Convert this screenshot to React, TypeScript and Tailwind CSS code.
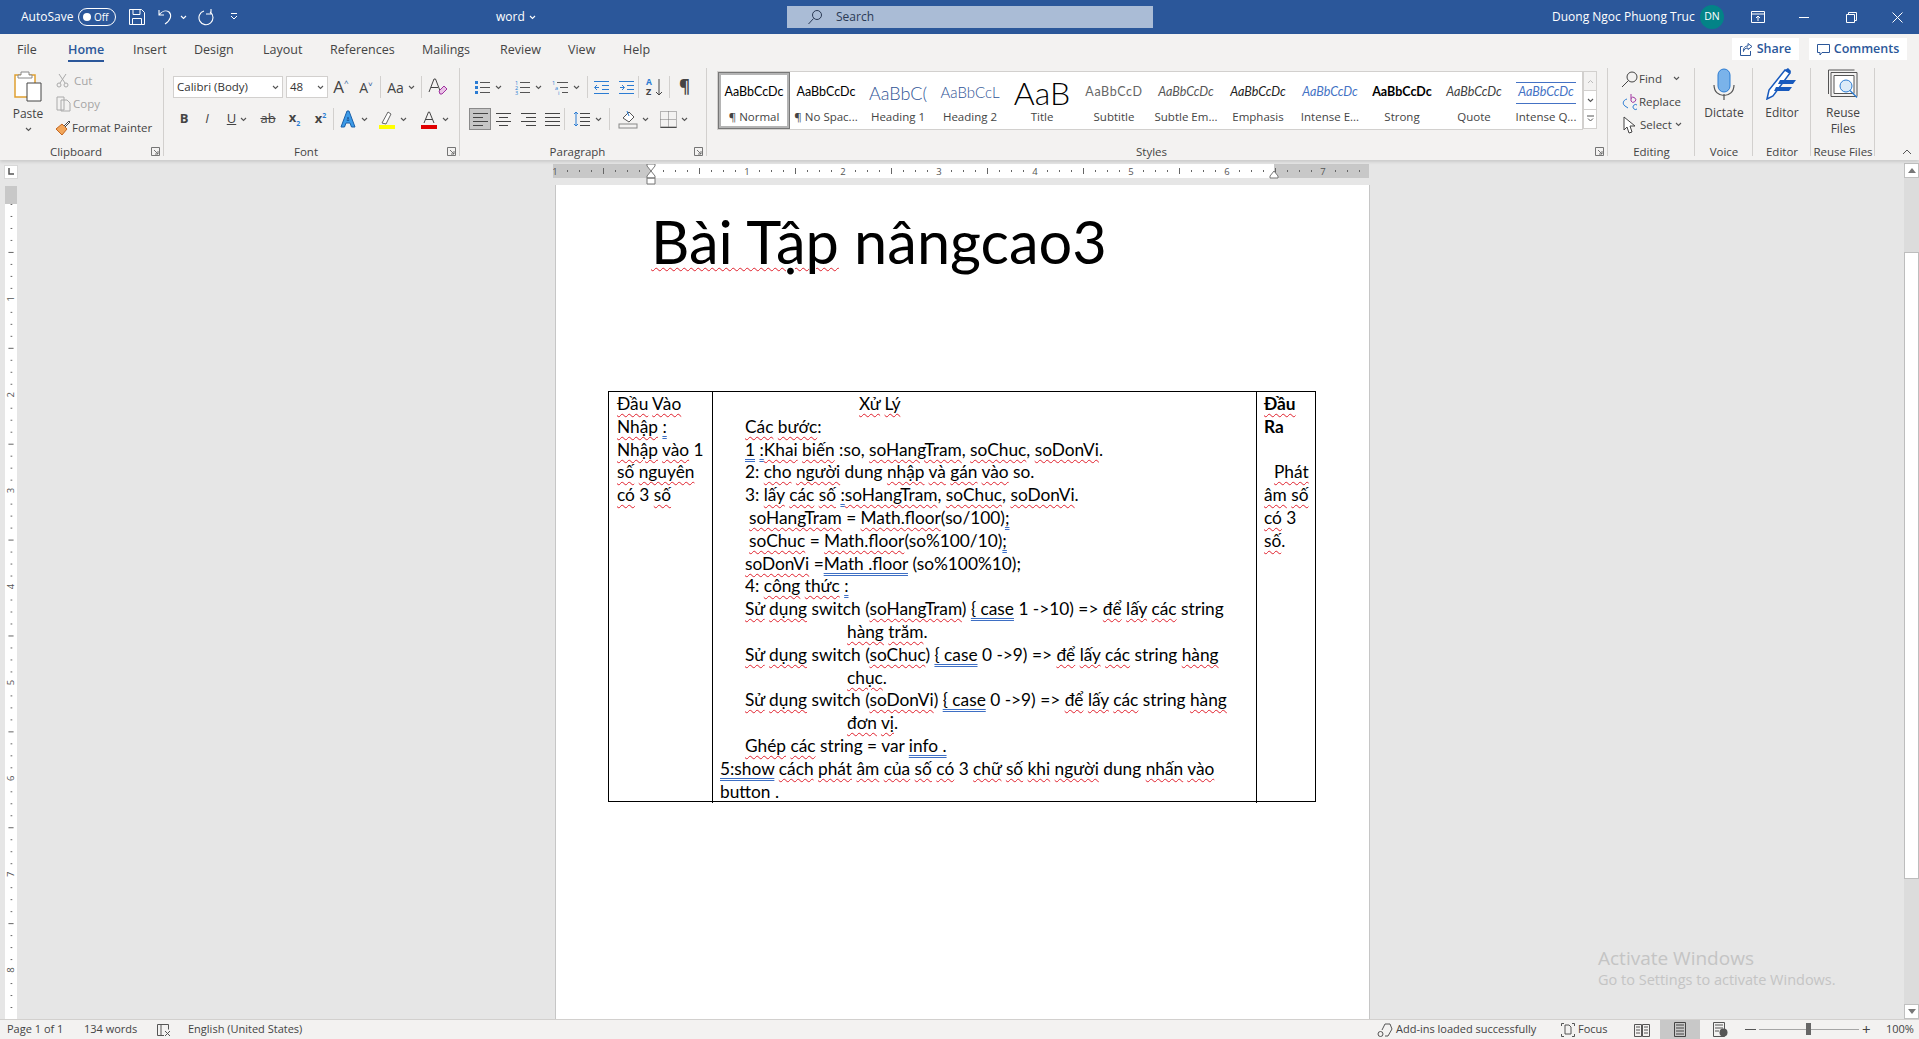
import React from "react";

const Caret = ({ c = "#555", w = 7 }: { c?: string; w?: number }) => (
  <svg width={w} height="5" viewBox="0 0 7 5" className="shrink-0"><path d="M1 1l2.5 2.5L6 1" fill="none" stroke={c} strokeWidth="1.1" /></svg>
);
const Sep = ({ h = "h-[22px]" }: { h?: string }) => <div className={`w-px bg-[#d2d0ce] shrink-0 ${h}`} />;
const R = ({ children }: { children: React.ReactNode }) => (
  <span className="underline decoration-wavy decoration-[#e0202c] decoration-1 underline-offset-[3px]">{children}</span>
);
const U = ({ children }: { children: React.ReactNode }) => (
  <span className="underline decoration-double decoration-[#3e6fc4] decoration-1 underline-offset-[3px]">{children}</span>
);

const Slot = ({ w, children, caret, cls = "" }: { w: number; children: React.ReactNode; caret?: boolean; cls?: string }) => (
  <div className={`flex items-center justify-center gap-[4px] shrink-0 h-[22px] ${cls}`} style={{ width: w }}>
    {children}
    {caret && <Caret />}
  </div>
);

const Lines = ({ kind }: { kind: "bullet" | "num" | "multi" | "out" | "in" }) => (
  <svg width="17" height="17" viewBox="0 0 17 17">
    {kind === "bullet" && <g><rect x="1" y="2" width="3" height="3" fill="#2b7cd3" /><rect x="1" y="7" width="3" height="3" fill="#2b7cd3" /><rect x="1" y="12" width="3" height="3" fill="#2b7cd3" /></g>}
    {kind === "num" && <g fontSize="5.5" fill="#2b7cd3" fontFamily="Open Sans"><text x="1" y="6">1</text><text x="1" y="11">2</text><text x="1" y="16">3</text></g>}
    {kind === "multi" && <g fontSize="5.5" fill="#2b7cd3" fontFamily="Open Sans"><text x="0" y="6">1</text><text x="3" y="11">a</text><text x="6" y="16">i</text></g>}
    {(kind === "bullet" || kind === "num") && <path d="M6 3.5h10M6 8.5h10M6 13.5h10" stroke="#555" fill="none" />}
    {kind === "multi" && <path d="M5 3.5h11M8 8.5h8M10 13.5h6" stroke="#555" fill="none" />}
    {kind === "out" && <path d="M1 2.5h15M9 6.5h7M9 10.5h7M1 14.5h15M6 8.5H2m2-2.5L1.500 8.500 4 11" stroke="#2b7cd3" fill="none" />}
    {kind === "in" && <path d="M1 2.500h15M9 6.500h7M9 10.500h7M1 14.500h15M2 8.500h4M4 6l2.500 2.500L4 11" stroke="#2b7cd3" fill="none" />}
  </svg>
);

const Align = ({ k }: { k: "l" | "c" | "r" | "j" }) => {
  const d = {
    l: "M1 2.500h15M1 6.500h10M1 10.500h15M1 14.500h10",
    c: "M1 2.500h15M4 6.500h9M1 10.500h15M4 14.500h9",
    r: "M1 2.500h15M6 6.500h10M1 10.500h15M6 14.500h10",
    j: "M1 2.500h15M1 6.500h15M1 10.500h15M1 14.500h15",
  }[k];
  return <svg width="17" height="17" viewBox="0 0 17 17"><path d={d} stroke="#444" fill="none" /></svg>;
};

const styles: { n: string; p: string; cls: string }[] = [
  { n: "¶ Normal", p: "AaBbCcDc", cls: "text-[12.5px] text-black" },
  { n: "¶ No Spac...", p: "AaBbCcDc", cls: "text-[12.5px] text-black" },
  { n: "Heading 1", p: "AaBbC(", cls: "text-[18px] font-light text-[#2f5496]" },
  { n: "Heading 2", p: "AaBbCcL", cls: "text-[15px] font-light text-[#2f5496]" },
  { n: "Title", p: "AaB", cls: "text-[32px] font-light text-black" },
  { n: "Subtitle", p: "AaBbCcD", cls: "text-[12.5px] text-[#666] tracking-[0.6px]" },
  { n: "Subtle Em...", p: "AaBbCcDc", cls: "text-[12.5px] text-[#555] italic" },
  { n: "Emphasis", p: "AaBbCcDc", cls: "text-[12.5px] text-[#222] italic" },
  { n: "Intense E...", p: "AaBbCcDc", cls: "text-[12.5px] text-[#4472c4] italic" },
  { n: "Strong", p: "AaBbCcDc", cls: "text-[12.5px] text-black font-bold" },
  { n: "Quote", p: "AaBbCcDc", cls: "text-[12.5px] text-[#404040] italic" },
  { n: "Intense Q...", p: "AaBbCcDc", cls: "text-[12.5px] text-[#4472c4] italic h-[22px] border-y border-[#4472c4]" },
];

const Group = ({ w, label, launcher, children }: { w: number; label: string; launcher?: boolean; children: React.ReactNode }) => (
  <div className="relative shrink-0 flex flex-col h-[94px]" style={{ width: w }}>
    <div className="flex-1 min-h-0">{children}</div>
    <div className={`h-[20px] text-center text-[11.5px] leading-[24px] text-[#444] ${launcher ? "pr-[12px]" : ""}`}>{label}</div>
    <div className="absolute right-0 top-[2px] bottom-[4px] w-px bg-[#d2d0ce]" />
    {launcher && (
      <svg width="9" height="9" viewBox="0 0 9 9" className="absolute right-[4px] bottom-[4px]"><path d="M.5.500h8v8h-8zM3 3l4 4M7 4v3H4" fill="none" stroke="#666" strokeWidth=".9" /></svg>
    )}
  </div>
);

const TitleBar = () => (
  <div className="h-[34px] bg-[#2b579a] text-white flex items-center text-[12px] shrink-0 relative">
    <span className="ml-[21px] w-[57px]">AutoSave</span>
    <div className="w-[38px] h-[18px] rounded-full border border-white flex items-center pl-[4px] gap-[3px]">
      <span className="w-[8px] h-[8px] rounded-full bg-white" />
      <span className="text-[10px]">Off</span>
    </div>
    <svg width="16" height="16" viewBox="0 0 16 16" className="ml-[13px]"><path d="M.5.500h12l3 3v12H.5zM4 .5v5h7v-5M3.500 15.500v-6h9v6" fill="none" stroke="#fff" /></svg>
    <svg width="18" height="18" viewBox="0 0 18 18" className="ml-[12px]"><path d="M2 2v5h5M2 7c3-4 7-5 10-3 3 3 2 8-4 12" fill="none" stroke="#fff" strokeWidth="1.1" /></svg>
    <span className="ml-[5px]"><Caret c="#fff" /></span>
    <svg width="18" height="18" viewBox="0 0 18 18" className="ml-[11px]"><path d="M13 1v5H8M12 4a7 7 0 1 1-6-1" fill="none" stroke="#fff" strokeWidth="1.1" /></svg>
    <svg width="8" height="10" viewBox="0 0 8 10" className="ml-[14px]"><path d="M1 1.500h6M1 4l3 3 3-3" fill="none" stroke="#fff" /></svg>
    <span className="ml-[258px] w-[33px] text-[12px]">word</span>
    <Caret c="#fff" />
    <div className="ml-[251px] w-[366px] h-[22px] bg-[#aabcd6] flex items-center text-[#2b3a55] text-[12px]">
      <svg width="16" height="16" viewBox="0 0 16 16" className="ml-[20px]"><circle cx="10" cy="6" r="4.500" fill="none" stroke="#2b3a55" /><path d="M6.500 9.500L1.500 15" stroke="#2b3a55" /></svg>
      <span className="ml-[13px]">Search</span>
    </div>
    <span className="ml-[399px] w-[148px] text-[12px] whitespace-nowrap">Duong Ngoc Phuong Truc</span>
    <div className="w-[24px] h-[24px] rounded-full bg-[#038387] flex items-center justify-center text-[10.5px]">DN</div>
    <svg width="14" height="12" viewBox="0 0 14 12" className="ml-[27px]"><path d="M.5.500h13v11H.5zM.5 3h13M7 10V5M5 7l2-2 2 2" fill="none" stroke="#fff" /></svg>
    <div className="ml-[34px] w-[10px] h-px bg-white" />
    <svg width="11" height="11" viewBox="0 0 11 11" className="ml-[37px]"><path d="M.5 2.500h8v8h-8zM2.500 2.500v-2h8v8h-2" fill="none" stroke="#fff" /></svg>
    <svg width="11" height="11" viewBox="0 0 11 11" className="ml-[35px]"><path d="M.5.500l10 10M10.500.500l-10 10" fill="none" stroke="#fff" /></svg>
  </div>
);

const tabs: [string, number][] = [["File", 17], ["Home", 68], ["Insert", 133], ["Design", 194], ["Layout", 263], ["References", 330], ["Mailings", 422], ["Review", 500], ["View", 568], ["Help", 623]];

const Tabs = () => (
  <div className="h-[32px] flex items-start pt-[5px] text-[12.5px] text-[#444] relative shrink-0">
    {tabs.map(([t, x], i) => {
      const next = i < tabs.length - 1 ? tabs[i + 1][1] : x + 40;
      const w = next - x;
      return (
        <div key={t} className="shrink-0" style={{ marginLeft: i === 0 ? x : 0, width: w }}>
          <span className={`inline-block h-[23px] leading-[21px] ${t === "Home" ? "border-b-[2.5px] border-[#2b579a] text-[#2b579a] font-semibold" : ""}`}>{t}</span>
        </div>
      );
    })}
    <div className="flex-1" />
    <div className="-mt-[1px] w-[67px] h-[22px] bg-white flex items-center justify-center gap-[4px] text-[#2b579a] font-semibold text-[12.5px]">
      <svg width="13" height="13" viewBox="0 0 13 13"><path d="M8 .5l4 3-4 3V5C5 5 4 6.500 3.500 8.500 3 5 5 3 8 3zM10.500 8v4.500h-10v-9h2" fill="none" stroke="#2b579a" /></svg>
      Share
    </div>
    <div className="-mt-[1px] ml-[10px] mr-[12px] w-[98px] h-[22px] bg-white flex items-center justify-center gap-[4px] text-[#2b579a] font-semibold text-[12.5px]">
      <svg width="13" height="13" viewBox="0 0 13 13"><path d="M.5 1.500h12v8H5l-2 2.500v-2.500H.5z" fill="none" stroke="#2b579a" /></svg>
      Comments
    </div>
  </div>
);

const Clipboard = () => (
  <Group w={164} label="Clipboard" launcher>
    <div className="flex h-full">
      <div className="w-[56px] flex flex-col items-center pt-[4px] text-[12px] text-[#444]">
        <svg width="30" height="32" viewBox="0 0 30 32">
          <path d="M2 5h20v22H2z" fill="#fff" stroke="#e0a030" strokeWidth="1.500" />
          <path d="M8 5V2h8v3h3v3H5V5z" fill="#fff" stroke="#888" />
          <path d="M14 13h14v18H14z" fill="#fff" stroke="#444" />
        </svg>
        <span className="leading-[16px] mt-[4px]">Paste</span>
        <span className="mt-[5px]"><Caret /></span>
      </div>
      <div className="flex flex-col text-[11.5px] pt-[3px]">
        <div className="h-[23px] flex items-center text-[#a5a5a5] gap-[4px]">
          <svg width="13" height="15" viewBox="0 0 13 15"><path d="M3 1l6 9M10 1l-6 9" stroke="#aaa" fill="none" /><circle cx="3" cy="12" r="2" fill="none" stroke="#aaa" /><circle cx="10" cy="12" r="2" fill="none" stroke="#aaa" /></svg>
          <span className="ml-[1px]">Cut</span>
        </div>
        <div className="h-[24px] flex items-center text-[#a5a5a5] gap-[1px]">
          <svg width="16" height="16" viewBox="0 0 16 16"><path d="M1 1h7v13H1zM5 4h6l3 3v8H5z" fill="#f3f2f1" stroke="#aaa" /></svg>
          Copy
        </div>
        <div className="h-[23px] flex items-center text-[#444] gap-[1px] whitespace-nowrap">
          <svg width="16" height="16" viewBox="0 0 16 16" className="-ml-[1px]"><path d="M1 9l6-5 5 5-5 6z" fill="#f2a65a" stroke="#c4661f" /><path d="M9 6l5-5 1 1-5 5" fill="#fff" stroke="#444" /></svg>
          Format Painter
        </div>
      </div>
    </div>
  </Group>
);

const Font = () => (
  <Group w={296} label="Font" launcher>
    <div className="flex flex-col pt-[10px] gap-[10px] h-full">
      <div className="flex items-center h-[22px] pl-[9px]">
        <div className="w-[110px] h-[22px] bg-white border border-[#d2d0ce] flex items-center justify-between px-[3px] text-[11.5px] text-[#333]">Calibri (Body)<Caret /></div>
        <div className="ml-[3px] w-[42px] h-[22px] bg-white border border-[#d2d0ce] flex items-center justify-between px-[3px] text-[11.5px] text-[#333]">48<Caret /></div>
        <Slot w={26} cls="text-[17px] text-[#444]">A<span className="text-[8px] leading-none mb-[8px] -ml-[4px] text-[#2b579a]">^</span></Slot>
        <Slot w={24} cls="text-[14px] text-[#444]">A<span className="text-[8px] leading-none mb-[6px] -ml-[4px] text-[#2b579a]">˅</span></Slot>
        <div className="ml-[2px]"><Sep /></div>
        <Slot w={40} caret cls="text-[14px] text-[#444]">Aa</Slot>
        <Sep />
        <Slot w={32} cls="text-[18px] text-[#444] relative">
          <svg width="20" height="20" viewBox="0 0 20 20"><path d="M1 15L6 2h1.500l5 13M3 10.500h7" fill="none" stroke="#444" /><path d="M11 14l5-5 3 3-5 5h-2z" fill="#e9c2e6" stroke="#a033a0" /></svg>
        </Slot>
      </div>
      <div className="flex items-center h-[22px] pl-[9px] text-[#444]">
        <Slot w={22} cls="font-bold text-[13px]">B</Slot>
        <Slot w={24} cls="italic text-[13px]"><span className="px-[2px]">I</span></Slot>
        <Slot w={36} caret cls="text-[13px]"><span className="underline">U</span></Slot>
        <Slot w={26} cls="line-through text-[13px]">ab</Slot>
        <Slot w={27} cls="font-bold text-[13px]"><span>x<span className="text-[7px] align-sub text-[#2b7cd3]">2</span></span></Slot>
        <Slot w={25} cls="font-bold text-[13px]"><span>x<span className="text-[7px] align-super text-[#2b7cd3]">2</span></span></Slot>
        <Sep />
        <Slot w={38} caret>
          <svg width="18" height="18" viewBox="0 0 18 18"><path d="M2 17L8 1h2l6 16h-3.500L11 13H7l-1.500 4zM8 10.500h2L9 7z" fill="#3c9be8" stroke="#1a5fa8" /></svg>
        </Slot>
        <Slot w={41} caret>
          <svg width="18" height="19" viewBox="0 0 18 19"><path d="M4 13l6-11 3 2-5 10z" fill="#fff" stroke="#666" /><rect x="1" y="15" width="16" height="4" fill="#ffff00" /></svg>
        </Slot>
        <Slot w={42} caret>
          <svg width="18" height="19" viewBox="0 0 18 19"><path d="M4 13L8.500 2h1L14 13M5.500 9.500h7" fill="none" stroke="#444" /><rect x="1" y="15" width="16" height="4" fill="#e00000" /></svg>
        </Slot>
      </div>
    </div>
  </Group>
);

const Paragraph = () => (
  <Group w={247} label="Paragraph" launcher>
    <div className="flex flex-col pt-[10px] gap-[10px] h-full">
      <div className="flex items-center h-[22px] pl-[8px]">
        <Slot w={40} caret><Lines kind="bullet" /></Slot>
        <Slot w={39} caret><Lines kind="num" /></Slot>
        <Slot w={38} caret><Lines kind="multi" /></Slot>
        <div className="ml-[2px]"><Sep /></div>
        <Slot w={26}><Lines kind="out" /></Slot>
        <Slot w={24}><Lines kind="in" /></Slot>
        <Sep />
        <Slot w={30} cls="relative">
          <svg width="18" height="20" viewBox="0 0 18 20"><text x="1" y="8" fontSize="8.500" fontWeight="700" fill="#2b7cd3" fontFamily="Open Sans">A</text><text x="1" y="18" fontSize="9" fontWeight="700" fill="#444" fontFamily="Open Sans">Z</text><path d="M14 2v16M11 15l3 3 3-3" fill="none" stroke="#444" /></svg>
        </Slot>
        <Sep />
        <Slot w={29} cls="text-[17px] font-bold text-[#444]">¶</Slot>
      </div>
      <div className="flex items-center h-[22px] pl-[9px]">
        <Slot w={22} cls="bg-[#c6c6c6] border border-[#8a8a8a]"><Align k="l" /></Slot>
        <Slot w={25}><Align k="c" /></Slot>
        <Slot w={24}><Align k="r" /></Slot>
        <Slot w={24}><Align k="j" /></Slot>
        <Sep />
        <Slot w={44} caret>
          <svg width="18" height="18" viewBox="0 0 18 18"><path d="M3 2v14M1 4l2-2 2 2M1 14l2 2 2-2" fill="none" stroke="#2b7cd3" /><path d="M7 3.500h10M7 7.500h10M7 11.500h10M7 15.500h10" stroke="#444" /></svg>
        </Slot>
        <Sep />
        <Slot w={46} caret>
          <svg width="20" height="20" viewBox="0 0 20 20"><path d="M5 9l6-6 5 5-5 5z" fill="#fff" stroke="#555" /><path d="M9 2l2 5" stroke="#2b7cd3" /><rect x="1" y="15" width="18" height="4" fill="#f3f2f1" stroke="#888" /></svg>
        </Slot>
        <Slot w={36} caret>
          <svg width="17" height="17" viewBox="0 0 17 17"><path d="M.5 16.500h16" stroke="#222" strokeWidth="1.500" /><path d="M.5.500h16v16H.5zM8.500.5v16M.5 8.500h16" fill="none" stroke="#777" strokeDasharray="1 1" /></svg>
        </Slot>
      </div>
    </div>
  </Group>
);

const Styles = () => (
  <Group w={901} label="Styles" launcher>
    <div className="flex ml-[10px] mt-[5px] h-[59px]">
      <div className="w-[866px] h-[59px] bg-white border border-[#d2d0ce] flex">
        {styles.map((s, i) => (
          <div key={s.n} className={`w-[72px] h-[57px] shrink-0 flex flex-col items-center overflow-hidden font-['Lato','Noto_Sans',sans-serif] ${i === 0 ? "border-[3px] border-[#b4b4b4] outline outline-1 -outline-offset-1 outline-[#777] pt-[2px]" : "pt-[5px]"}`}>
            <div className="h-[31px] w-[60px] flex items-center justify-center">
              <div className={`w-[60px] flex items-center justify-center overflow-hidden whitespace-nowrap leading-none ${s.cls}`}>{s.p}</div>
            </div>
            <div className={`font-['Open_Sans',sans-serif] text-[11.5px] leading-[18px] text-[#444] whitespace-nowrap`}>{s.n}</div>
          </div>
        ))}
      </div>
      <div className="w-[14px] flex flex-col">
        {[0, 1, 2].map((i) => (
          <div key={i} className={`h-[20px] border border-[#d2d0ce] -mb-px flex items-center justify-center ${i === 0 ? "bg-[#f3f2f1]" : "bg-white"}`}>
            {i === 0 && <svg width="7" height="5" viewBox="0 0 7 5"><path d="M1 4l2.500-2.500L6 4" fill="none" stroke="#bbb" /></svg>}
            {i === 1 && <Caret />}
            {i === 2 && <svg width="7" height="8" viewBox="0 0 7 8"><path d="M0 1h7M1 3.500l2.500 2.500L6 3.500" fill="none" stroke="#555" /></svg>}
          </div>
        ))}
      </div>
    </div>
  </Group>
);

const Editing = () => (
  <Group w={87} label="Editing">
    <div className="flex flex-col pl-[13px] pt-[1px] text-[11.5px] text-[#444]">
      <div className="h-[23px] flex items-center">
        <svg width="18" height="18" viewBox="0 0 18 18"><circle cx="11" cy="7" r="5" fill="none" stroke="#444" /><path d="M7.500 10.500L1 17" stroke="#444" /></svg>
        <span className="ml-[0px]">Find</span>
        <span className="ml-[11px]"><Caret /></span>
      </div>
      <div className="h-[23px] flex items-center">
        <svg width="18" height="18" viewBox="0 0 18 18" className="shrink-0"><path d="M10 1v7M10 5.500a2.500 2.500 0 1 1 0 2.500" fill="none" stroke="#a033a0" /><path d="M16 12a2.500 2.500 0 1 0 0 4" fill="none" stroke="#2b7cd3" /><path d="M6 6C2 7 1 11 4 13l3 2" fill="none" stroke="#2b7cd3" /></svg>
        <span className="ml-[0px]">Replace</span>
      </div>
      <div className="h-[23px] flex items-center">
        <svg width="14" height="18" viewBox="0 0 14 18" className="ml-[2px]"><path d="M1 1l11 9H7l2 6-3 1-2-6-3 3z" fill="#fff" stroke="#444" /></svg>
        <span className="ml-[3px]">Select</span>
        <span className="ml-[3px]"><Caret /></span>
      </div>
    </div>
  </Group>
);

const Big = ({ w, label, lines, icon }: { w: number; label: string; lines: string[]; icon: React.ReactNode }) => (
  <Group w={w} label={label}>
    <div className="flex flex-col items-center pt-[1px] text-[12px] leading-[16px] text-[#444]">
      <div className="h-[34px] flex items-center">{icon}</div>
      <div className="mt-[4px]">{lines.map((l) => <div key={l} className="text-center">{l}</div>)}</div>
    </div>
  </Group>
);

const Ribbon = () => (
  <div className="bg-[#f3f2f1] flex flex-col shrink-0 h-[126px] shadow-[0_2px_3px_rgba(0,0,0,0.12)] relative z-10 font-['Open_Sans',sans-serif]">
    <Tabs />
    <div className="flex">
      <Clipboard />
      <Font />
      <Paragraph />
      <Styles />
      <Editing />
      <Big w={58} label="Voice" lines={["Dictate"]} icon={
        <svg width="22" height="32" viewBox="0 0 22 32"><rect x="5" y="1" width="12" height="23" rx="6" fill="#7ab3ea" stroke="#2b7cd3" /><path d="M1 17c0 14 20 14 20 0M11 26v6" fill="none" stroke="#555" strokeWidth="1.200" /></svg>
      } />
      <Big w={58} label="Editor" lines={["Editor"]} icon={
        <svg width="32" height="32" viewBox="0 0 32 32"><path d="M1 31L3 22 19 2l5 3L7 28z" fill="#fff" stroke="#185abd" strokeWidth="1.500" /><path d="M14 12h16l-3 4H12zM10 19h16l-3 4H8z" fill="#185abd" /><path d="M19 2l3-2 3 3-1 3z" fill="#185abd" /></svg>
      } />
      <Big w={64} label="Reuse Files" lines={["Reuse", "Files"]} icon={
        <svg width="30" height="30" viewBox="0 0 30 30"><path d="M.5 1h26M.5 1v24M3 3.500h26v24H3z" fill="none" stroke="#555" /><path d="M6 6.500h20v18H6z" fill="#fff" stroke="#555" /><circle cx="18" cy="17" r="6" fill="#dcebf8" stroke="#2b7cd3" /><path d="M22 21.500l7 7" stroke="#2b7cd3" strokeWidth="1.300" /></svg>
      } />
      <div className="flex-1 relative">
        <svg width="10" height="6" viewBox="0 0 10 6" className="ml-[27px] mt-[83px]"><path d="M1 5l4-4 4 4" fill="none" stroke="#555" /></svg>
      </div>
    </div>
  </div>
);

const HRuler = () => {
  const W = 816, O = 98;
  const marks: React.ReactNode[] = [];
  for (let i = -8; i < 60; i++) {
    const x = O + i * 12;
    if (x < 0 || x > W) continue;
    if (i % 8 === 0) continue;
    marks.push(i % 4 === 0 ? <rect key={i} x={x} y="4" width="1" height="6" fill="#666" /> : <rect key={i} x={x} y="6" width="1" height="2" fill="#666" />);
  }
  return (
    <svg width={W} height="24" viewBox={`0 0 ${W} 24`} className="block -ml-[2px]">
      <rect y="0" width={W} height="14" fill="#c8c8c8" />
      <rect x={O} y="0" width="623" height="14" fill="#fff" />
      {marks}
      {[-1, 1, 2, 3, 4, 5, 6, 7].map((n) => (
        <text key={n} x={O + n * 96} y="11" fontSize="9.500" fill="#555" textAnchor="middle" fontFamily="Open Sans">{Math.abs(n)}</text>
      ))}
      <path d={`M${O - 4} 0h8v2l-4 5-4-5zM${O} 7l4 5v2h-8v-2zM${O - 4} 14h8v6h-8z`} fill="#fff" stroke="#777" />
      <path d={`M${O + 623} 7l4 5v2h-8v-2z`} fill="#fff" stroke="#777" />
    </svg>
  );
};

const VRuler = () => {
  const marks: React.ReactNode[] = [];
  for (let i = 0; i < 68; i++) {
    const y = 18 + i * 12;
    if (i % 8 === 0 && i > 0) continue;
    marks.push(i % 4 === 0 && i > 0 ? <rect key={i} x="4" y={y} width="6" height="1" fill="#666" /> : <rect key={i} x="6.500" y={y} width="2" height="1" fill="#666" />);
  }
  return (
    <svg width="12" height="834" viewBox="0 0 14 834" preserveAspectRatio="none" className="block ml-[5px] mt-[7px]">
      <rect width="14" height="834" fill="#fff" />
      <rect width="14" height="18" fill="#c8c8c8" />
      {marks}
      {[1, 2, 3, 4, 5, 6, 7, 8].map((n) => (
        <text key={n} x={0} y={0} fontSize="9.500" fill="#555" textAnchor="middle" fontFamily="Open Sans" transform={`translate(10 ${17 + n * 96}) rotate(-90)`}>{n}</text>
      ))}
    </svg>
  );
};

const L = ({ i = 0, children }: { i?: number; children?: React.ReactNode }) => (
  <div className="whitespace-nowrap h-[22.8px]" style={{ paddingLeft: i }}>{children}&nbsp;</div>
);

const Doc = () => (
  <div className="font-['Lato','Noto_Sans',sans-serif] text-black">
    <div className="pl-[95px] pt-[11px] h-[206px] text-[59.5px] leading-[90px] whitespace-nowrap">
      <R>Bài Tập</R> nângcao3
    </div>
    <div className="ml-[52px] w-[708px] h-[411px] pt-px grid grid-cols-[104px_544px_58px] border border-black text-[17.3px] leading-[22.8px]">
      <div className="border-r border-black pl-[8px] -mt-px pt-px">
        <L><R>Đầu</R> <R>Vào</R></L>
        <L><R>Nhập</R> <U>:</U></L>
        <L><R>Nhập</R> <R>vào</R> 1</L>
        <L><R>số</R> <R>nguyên</R></L>
        <L><R>có</R> 3 <R>số</R></L>
      </div>
      <div className="border-r border-black -mt-px pt-px">
        <L i={146}><R>Xử</R> <R>Lý</R></L>
        <L i={32}><R>Các</R> <R>bước</R>:</L>
        <L i={32}><U>1</U> <U>:</U><R>Khai</R> <R>biến</R> :so, <R>soHangTram</R>, <R>soChuc</R>, <R>soDonVi</R>.</L>
        <L i={32}>2: <R>cho</R> <R>người</R> dung <R>nhập</R> <R>và</R> <R>gán</R> <R>vào</R> so.</L>
        <L i={32}>3: <R>lấy</R> <R>các</R> <R>số</R> <U>:</U><R>soHangTram</R>, <R>soChuc</R>, <R>soDonVi</R>.</L>
        <L i={36}><R>soHangTram</R> = <R>Math.floor</R>(so/100)<U>;</U></L>
        <L i={36}><R>soChuc</R> = <R>Math.floor</R>(so%100/10)<U>;</U></L>
        <L i={32}><R>soDonVi</R> =<U>Math .floor</U> (so%100%10);</L>
        <L i={32}>4: <R>công</R> <R>thức</R> <U>:</U></L>
        <L i={32}><R>Sử</R> <R>dụng</R> switch (<R>soHangTram</R>) <U>{"{ case"}</U> 1 -&gt;10) =&gt; <R>để</R> <R>lấy</R> <R>các</R> string</L>
        <L i={134}><R>hàng</R> <R>trăm</R>.</L>
        <L i={32}><R>Sử</R> <R>dụng</R> switch (<R>soChuc</R>) <U>{"{ case"}</U> 0 -&gt;9) =&gt; <R>để</R> <R>lấy</R> <R>các</R> string <R>hàng</R></L>
        <L i={134}><R>chục</R>.</L>
        <L i={32}><R>Sử</R> <R>dụng</R> switch (<R>soDonVi</R>) <U>{"{ case"}</U> 0 -&gt;9) =&gt; <R>để</R> <R>lấy</R> <R>các</R> string <R>hàng</R></L>
        <L i={134}><R>đơn</R> <R>vị</R>.</L>
        <L i={32}><R>Ghép</R> <R>các</R> string = var <U>info .</U></L>
        <L i={7}><U>5:show</U> <R>cách</R> <R>phát</R> <R>âm</R> <R>của</R> <R>số</R> <R>có</R> 3 <R>chữ</R> <R>số</R> <R>khi</R> <R>người</R> dung <R>nhấn</R> <R>vào</R></L>
        <L i={7}>button .</L>
      </div>
      <div className="pl-[7px]">
        <L><span className="font-bold"><R>Đầu</R></span></L>
        <L><span className="font-bold">Ra</span></L>
        <L />
        <L i={10}><R>Phát</R></L>
        <L><R>âm</R> <R>số</R></L>
        <L><R>có</R> 3</L>
        <L><R>số</R>.</L>
      </div>
    </div>
  </div>
);

const Canvas = () => (
  <div className="flex-1 min-h-0 flex bg-[#e6e6e6]">
    <div className="w-[555px] shrink-0 flex flex-col">
      <div className="mt-[5px] ml-[4px] w-[14px] h-[14px] bg-white border border-[#d8d8d8] flex items-center justify-center">
        <svg width="6" height="7" viewBox="0 0 6 7"><path d="M1 0v6h5" fill="none" stroke="#555" strokeWidth="1.500" /></svg>
      </div>
      <VRuler />
    </div>
    <div className="w-[815px] shrink-0 flex flex-col">
      <div className="mt-[4px] h-[21px]"><HRuler /></div>
      <div className="flex-1 bg-white border-x border-[#c6c6c6] overflow-hidden"><Doc /></div>
    </div>
    <div className="flex-1 flex flex-col justify-end pl-[228px] pb-[29px] font-['Open_Sans',sans-serif] text-[#c4c4c4] whitespace-nowrap">
      <div className="text-[19px] leading-[24px]">Activate Windows</div>
      <div className="text-[14.5px] leading-[20px]">Go to Settings to activate Windows.</div>
    </div>
    <div className="w-[15px] shrink-0 flex flex-col pt-[3px]">
      <div className="h-[15px] bg-white border border-[#c0c0c0] flex items-center justify-center"><svg width="8" height="5" viewBox="0 0 8 5"><path d="M0 5l4-5 4 5z" fill="#777" /></svg></div>
      <div className="flex-1 flex flex-col bg-[#dcdcdc]">
        <div className="h-[74px]" />
        <div className="h-[627px] bg-white border border-[#bdbdbd]" />
      </div>
      <div className="h-[15px] bg-white border border-[#c0c0c0] flex items-center justify-center"><svg width="8" height="5" viewBox="0 0 8 5"><path d="M0 0l4 5 4-5z" fill="#777" /></svg></div>
    </div>
  </div>
);

const StatusBar = () => (
  <div className="h-[20px] bg-[#f3f2f1] border-t border-[#d2d0ce] shrink-0 flex items-center text-[11px] text-[#444] font-['Open_Sans',sans-serif] whitespace-nowrap">
    <span className="ml-[7px] w-[77px]">Page 1 of 1</span>
    <span className="w-[72px]">134 words</span>
    <svg width="15" height="14" viewBox="0 0 15 14"><path d="M8 12.500H1.500v-11h11v5M5 1.500v11M9 8l5 5M14 8l-5 5" fill="none" stroke="#555" /></svg>
    <span className="ml-[17px]">English (United States)</span>
    <div className="flex-1" />
    <svg width="16" height="14" viewBox="0 0 16 14"><path d="M5 7l3-6h5l2 5-4 7H8" fill="none" stroke="#555" /><circle cx="3.500" cy="11" r="2.500" fill="none" stroke="#555" /></svg>
    <span className="ml-[3px] w-[165px]">Add-ins loaded successfully</span>
    <svg width="14" height="14" viewBox="0 0 14 14"><path d="M.5 3V.5H3M11 .5h2.500V3M.5 11v2.500H3M11 13.500h2.500V11M4 11V2h4l2 2v7z" fill="none" stroke="#555" /></svg>
    <span className="ml-[3px] w-[56px]">Focus</span>
    <svg width="16" height="14" viewBox="0 0 16 14"><path d="M.5 1.500h7v12h-7zM8.500 1.500h7v12h-7zM2 4h4M2 7h4M2 10h4M10 4h4M10 7h4M10 10h4" fill="none" stroke="#555" /></svg>
    <div className="ml-[10px] w-[40px] h-[19px] bg-[#c8c8c8] flex items-center justify-center">
      <svg width="12" height="15" viewBox="0 0 12 15"><path d="M.5.500h11v14H.5zM2 3h8M2 6h8M2 9h8M2 12h8" fill="none" stroke="#444" /></svg>
    </div>
    <svg width="15" height="15" viewBox="0 0 15 15" className="ml-[13px]"><path d="M.5.500h11v14H.5zM2 3h8M2 6h8M2 9h4" fill="none" stroke="#555" /><circle cx="10.500" cy="10.500" r="4" fill="#555" /></svg>
    <span className="ml-[17px] w-[11px] h-px bg-[#555]" />
    <div className="relative ml-[3px] w-[100px] h-px bg-[#a6a6a6]">
      <span className="absolute left-[47px] -top-[6px] w-[5px] h-[12px] bg-[#666]" />
    </div>
    <span className="ml-[3px] text-[15px] leading-none w-[19px]">+</span>
    <span className="ml-[5px] w-[33px]">100%</span>
  </div>
);

export default function App() {
  return (
    <div className="w-[1919px] h-[1039px] flex flex-col overflow-hidden font-['Open_Sans',sans-serif]">
      <TitleBar />
      <Ribbon />
      <Canvas />
      <StatusBar />
    </div>
  );
}
